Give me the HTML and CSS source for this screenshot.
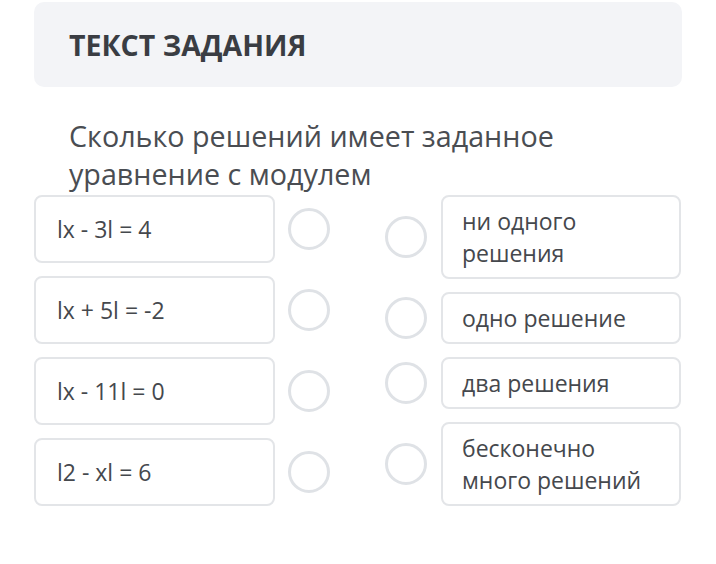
FILE: index.html
```html
<!DOCTYPE html>
<html lang="ru">
<head>
<meta charset="utf-8">
<link rel="stylesheet" href="styles.css">
</head>
<body>
<div class="page">
  <div class="header"><h1 class="title">ТЕКСТ ЗАДАНИЯ</h1></div>
  <p class="question">Сколько решений имеет заданное уравнение с модулем</p>
  <div class="match">
    <div class="col col-left">
      <div class="row"><div class="box box-left">lx - 3l = 4</div><span class="radio"></span></div>
      <div class="row"><div class="box box-left">lx + 5l = -2</div><span class="radio"></span></div>
      <div class="row"><div class="box box-left">lx - 11l = 0</div><span class="radio"></span></div>
      <div class="row"><div class="box box-left">l2 - xl = 6</div><span class="radio"></span></div>
    </div>
    <div class="col col-right">
      <div class="row"><span class="radio"></span><div class="box box-right">ни одного<br>решения</div></div>
      <div class="row"><span class="radio"></span><div class="box box-right">одно решение</div></div>
      <div class="row"><span class="radio"></span><div class="box box-right">два решения</div></div>
      <div class="row"><span class="radio"></span><div class="box box-right">бесконечно<br>много решений</div></div>
    </div>
  </div>
</div>
</body>
</html>
```
FILE: styles.css
```css
* { box-sizing: border-box; }
html, body { margin: 0; padding: 0; background: #ffffff; }
body { font-family: "Open Sans", "Noto Sans", sans-serif; color: #46494e; }
.page { padding: 2px 34px 0 34px; width: 716px; }
.header {
  height: 85px;
  width: 648px;
  background: #f3f4f7;
  border-radius: 10px;
  display: flex;
  align-items: center;
  padding-left: 35px;
}
.title {
  margin: 0;
  font-size: 28.5px;
  font-weight: 700;
  color: #3a3d43;
}
.question {
  margin: 30px 0 2px 35px;
  font-size: 28.7px;
  line-height: 38px;
  color: #4a4d52;
  width: 540px;
}
.match { display: flex; gap: 55px; }
.col { display: flex; flex-direction: column; gap: 13.5px; }
.col-left .row { height: 67.5px; }
.row { display: flex; align-items: center; }
.col-left .row { gap: 13px; }
.col-right .row { gap: 14px; }
.box {
  border: 2px solid #e3e5e8;
  border-radius: 8px;
  background: #fff;
  font-size: 23px;
  color: #45484d;
}
.box-left {
  width: 241px;
  height: 100%;
  display: flex;
  align-items: center;
  padding-left: 21px;
}
.box-right {
  width: 240px;
  padding: 8px 19px 7.5px 19px;
  line-height: 32px;
}
.radio {
  width: 42px;
  height: 42px;
  border: 3px solid #dfe2e6;
  border-radius: 50%;
  flex: none;
}
```
